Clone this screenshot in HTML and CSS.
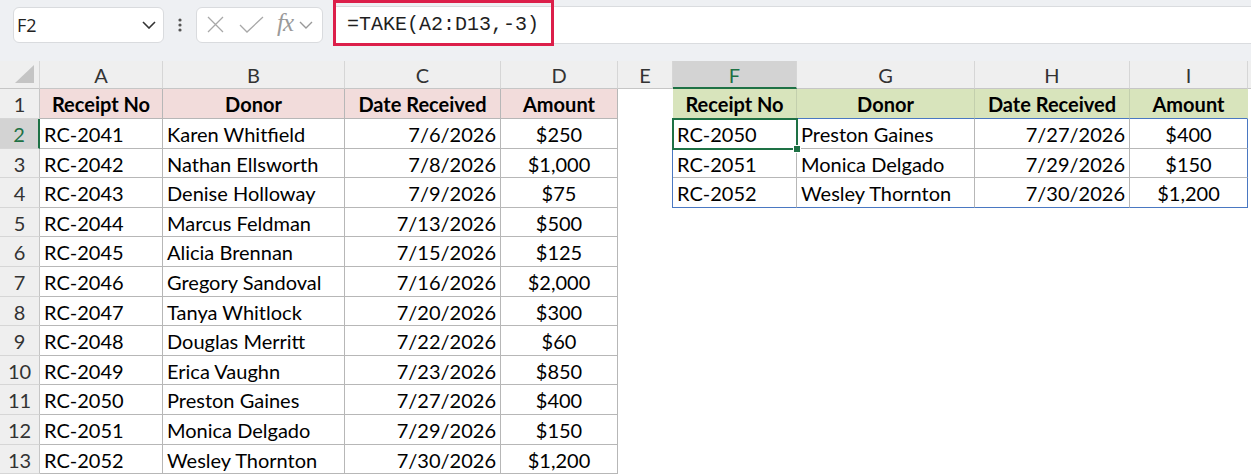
FILE: index.html
```html
<!DOCTYPE html>
<html lang="en">
<head>
  <meta charset="UTF-8">
  <meta name="viewport" content="width=device-width, initial-scale=1.0">
  <title>Donations - TAKE</title>
  <link rel="stylesheet" href="styles.css">
</head>
<body>
  <!-- Barra de fórmulas -->
  <div class="toolbar">
    <div class="namebox">
      <span>F2</span>
      <svg class="chev" width="14" height="8" viewBox="0 0 14 8"><path d="M1 1l6 6 6-6" fill="none" stroke="#333" stroke-width="1.6"/></svg>
    </div>
    <div class="dots">
      <svg width="4" height="14" viewBox="0 0 4 14"><circle cx="2" cy="2" r="1.6" fill="#555"/><circle cx="2" cy="7" r="1.6" fill="#555"/><circle cx="2" cy="12" r="1.6" fill="#555"/></svg>
    </div>
    <div class="fnbox">
      <svg class="ico-x" width="17" height="17" viewBox="0 0 17 17"><path d="M1 1l15 15M16 1L1 16" stroke="#a8a8a8" stroke-width="1.3"/></svg>
      <svg class="ico-ok" width="25" height="17" viewBox="0 0 25 17"><path d="M1 9l7 7L24 1" fill="none" stroke="#a8a8a8" stroke-width="1.3"/></svg>
      <span class="fx">fx</span>
      <svg width="14" height="8" viewBox="0 0 14 8"><path d="M1 1l6 6 6-6" fill="none" stroke="#999" stroke-width="1.4"/></svg>
    </div>
    <div class="formula">
      <span class="formula-text">=TAKE(A2:D13,-3)</span>
      <span class="mark"></span>
    </div>
  </div>

  <!-- Planilha -->
  <div class="sheet" id="sheet"></div>

  <script>
    const cols = ['A', 'B', 'C', 'D', 'E', 'F', 'G', 'H', 'I'];
    const heads = ['Receipt No', 'Donor', 'Date Received', 'Amount'];
    const donations = [
      ['RC-2041', 'Karen Whitfield', '7/6/2026', '$250'],
      ['RC-2042', 'Nathan Ellsworth', '7/8/2026', '$1,000'],
      ['RC-2043', 'Denise Holloway', '7/9/2026', '$75'],
      ['RC-2044', 'Marcus Feldman', '7/13/2026', '$500'],
      ['RC-2045', 'Alicia Brennan', '7/15/2026', '$125'],
      ['RC-2046', 'Gregory Sandoval', '7/16/2026', '$2,000'],
      ['RC-2047', 'Tanya Whitlock', '7/20/2026', '$300'],
      ['RC-2048', 'Douglas Merritt', '7/22/2026', '$60'],
      ['RC-2049', 'Erica Vaughn', '7/23/2026', '$850'],
      ['RC-2050', 'Preston Gaines', '7/27/2026', '$400'],
      ['RC-2051', 'Monica Delgado', '7/29/2026', '$150'],
      ['RC-2052', 'Wesley Thornton', '7/30/2026', '$1,200']
    ];
    // resultado do TAKE: últimas 3 linhas
    const taken = donations.slice(-3);
    const align = ['left', 'left', 'right', 'center'];

    const sheet = document.getElementById('sheet');

    function cell(text, cls) {
      const div = document.createElement('div');
      div.className = 'cell ' + cls;
      div.textContent = text;
      sheet.appendChild(div);
    }

    // cabeçalho das colunas (J fica cortada na borda)
    cell('', 'corner');
    cols.forEach(c => cell(c, c === 'F' ? 'colhead active' : 'colhead'));
    cell('', 'colhead');

    for (let r = 1; r <= 13; r++) {
      cell(String(r), r === 2 ? 'rowhead active' : 'rowhead');

      // tabela original A:D
      for (let c = 0; c < 4; c++) {
        if (r === 1) cell(heads[c], 'b head-pink');
        else cell(donations[r - 2][c], 'b ' + align[c]);
      }

      // coluna E vazia
      cell('', r >= 2 && r <= 4 ? 'spill-left' : '');

      // resultado F:I
      for (let c = 0; c < 4; c++) {
        if (r === 1) {
          cell(heads[c], 'head-green' + (c === 3 ? ' last' : ''));
        } else if (r <= 4) {
          let cls = 'b spill ' + align[c];
          if (c === 3) cls += ' spill-right';
          if (r === 4) cls += ' spill-bottom';
          if (r === 2 && c === 0) cls += ' selected';
          cell(taken[r - 2][c], cls);
        } else {
          cell('', '');
        }
      }

      cell('', '');
    }
  </script>
</body>
</html>
```

FILE: styles.css
```css
body {
  margin: 0;
  padding: 0;
  background-color: #fff;
  font-family: Lato, "Liberation Sans", sans-serif;
  color: #000;
  overflow: hidden;
}

/* barra de fórmulas */
.toolbar {
  display: flex;
  align-items: center;
  height: 61px;
  padding: 0 0 12px 13px;
  box-sizing: border-box;
  background-color: #eef0f3;
}
.namebox {
  display: flex;
  align-items: center;
  justify-content: space-between;
  width: 151px;
  height: 36px;
  box-sizing: border-box;
  padding: 0 7px 0 3px;
  background-color: white;
  border: 1px solid #d9dbde;
  border-radius: 6px;
  font-family: "Open Sans", sans-serif;
  font-size: 18px;
  color: #222;
}
.dots {
  display: flex;
  align-items: center;
  justify-content: center;
  width: 32px;
  height: 36px;
}
.fnbox {
  display: flex;
  align-items: center;
  width: 127px;
  height: 36px;
  box-sizing: border-box;
  padding: 0 4px 0 10px;
  background-color: white;
  border: 1px solid #d9dbde;
  border-radius: 6px;
}
.ico-x {
  margin-right: 15px;
}
.ico-ok {
  margin-right: 13px;
}
.fx {
  font-family: "Liberation Serif", serif;
  font-style: italic;
  font-size: 25px;
  color: #9a9a9a;
  margin-right: 6px;
  margin-top: -4px;
  letter-spacing: -1px;
}
.formula {
  position: relative;
  flex: 1;
  display: flex;
  align-items: center;
  height: 36px;
  margin-left: 10px;
  padding-left: 13px;
  background-color: white;
  border-top: 1px solid #dadcdf;
  border-bottom: 1px solid #dadcdf;
  border-left: 1px solid #dadcdf;
  font-family: "Liberation Mono", monospace;
  font-size: 20px;
  color: #1f1f1f;
}
.mark {
  position: absolute;
  left: -1px;
  top: -7px;
  width: 221px;
  height: 46px;
  box-sizing: border-box;
  border: 3px solid #dc1f4a;
}

/* planilha */
.sheet {
  display: grid;
  grid-template-columns: 40px 123px 182px 156px 117px 55px 124px 178px 155px 118px 1fr;
  grid-template-rows: 28px 30px 30px 29px 30px 29px 30px 30px 29px 30px 29px 30px 30px 29px;
  font-size: 20px;
}
.cell {
  position: relative;
  display: flex;
  align-items: center;
  box-sizing: border-box;
  padding: 1px 4px 0 4px;
  white-space: nowrap;
  overflow: visible;
}
.corner {
  background-color: #efefef;
  border-right: 1px solid #d6d6d6;
  border-bottom: 1px solid #c6c6c6;
}
.corner::after {
  content: "";
  position: absolute;
  right: 5px;
  bottom: 5px;
  width: 0;
  height: 0;
  border-left: 19px solid transparent;
  border-bottom: 18px solid #c4c4c4;
}
.colhead {
  justify-content: center;
  background-color: #efefef;
  color: #333;
  border-right: 1px solid #d6d6d6;
  border-bottom: 1px solid #c6c6c6;
}
.colhead.active {
  background-color: #d3d3d3;
  color: #1e7145;
  border-bottom: 2px solid #1e7145;
}
.rowhead {
  justify-content: center;
  background-color: #efefef;
  color: #333;
  border-right: 1px solid #c6c6c6;
  border-bottom: 1px solid #d6d6d6;
}
.rowhead.active {
  background-color: #d3d3d3;
  color: #1e7145;
  border-right: 2px solid #1e7145;
}

.b {
  border-right: 1px solid #b7b7b7;
  border-bottom: 1px solid #b7b7b7;
}
.left {
  justify-content: flex-start;
}
.right {
  justify-content: flex-end;
}
.center {
  justify-content: center;
}
.head-pink {
  justify-content: center;
  font-weight: bold;
  background-color: #f2dcdb;
}
.head-green {
  justify-content: center;
  font-weight: bold;
  background-color: #d8e4bc;
  border-right: 1px solid #c3cfad;
  border-bottom: 1px solid #4a78c2;
}
.head-green.last {
  border-right-color: #d8e4bc;
}
.spill-left {
  border-right: 1px solid #4a78c2;
}
.spill-right {
  border-right: 1px solid #4a78c2;
}
.spill-bottom {
  border-bottom: 1px solid #4a78c2;
}
.selected {
  outline: 2px solid #1e7145;
  outline-offset: -1px;
  z-index: 1;
}
.selected::after {
  content: "";
  position: absolute;
  right: -5px;
  bottom: -5px;
  width: 6px;
  height: 6px;
  background-color: #1e7145;
  border: 1px solid white;
}
```
